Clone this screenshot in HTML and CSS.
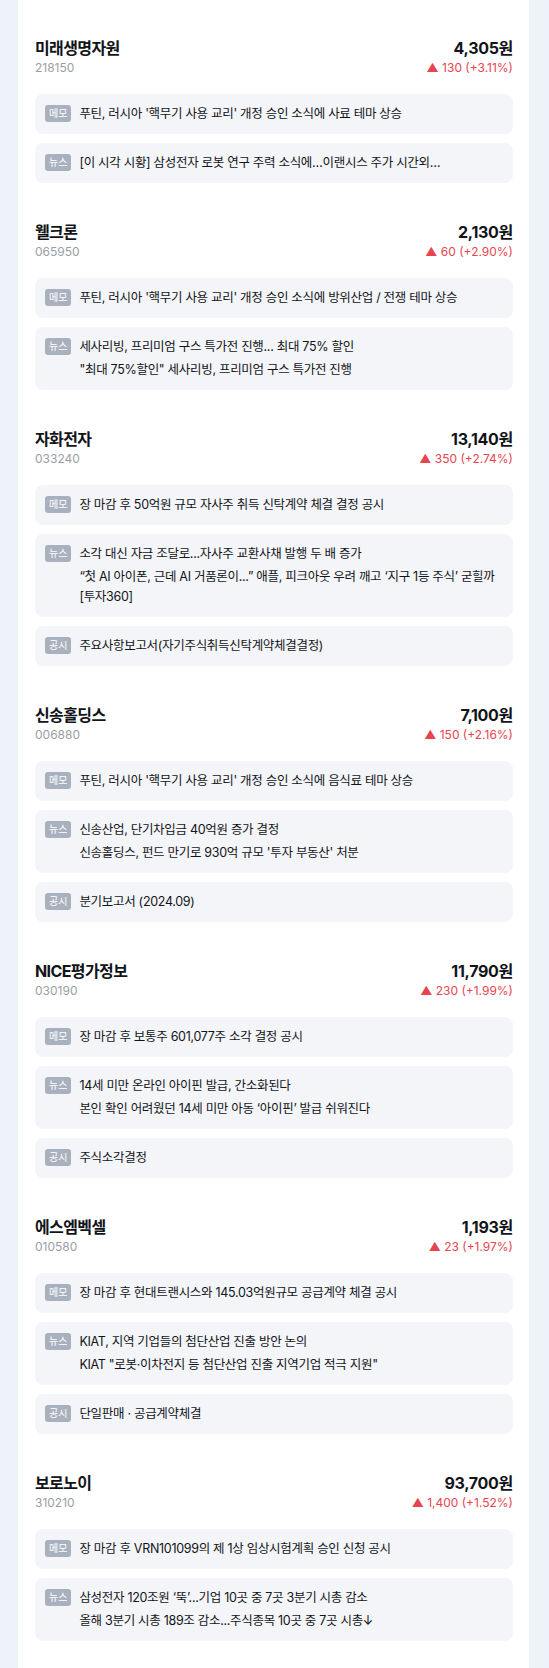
FILE: index.html
```html
<!DOCTYPE html>
<html lang="ko">
<head>
    <meta charset="UTF-8">
    <meta name="viewport" content="width=device-width, initial-scale=1.0">
    <title>오늘의 특징주</title>
    <link rel="stylesheet" href="styles.css">
</head>
<body>
    <div class="container">

        <!-- 미래생명자원 -->
        <section class="stock">
            <div class="stock-head">
                <div>
                    <div class="stock-name">미래생명자원</div>
                    <div class="stock-code">218150</div>
                </div>
                <div class="stock-price">
                    <div class="price">4,305원</div>
                    <div class="change">▲ 130 (+3.11%)</div>
                </div>
            </div>
            <div class="note">
                <span class="tag">메모</span>
                <div class="note-body">
                    <p>푸틴, 러시아 '핵무기 사용 교리' 개정 승인 소식에 사료 테마 상승</p>
                </div>
            </div>
            <div class="note">
                <span class="tag">뉴스</span>
                <div class="note-body">
                    <p>[이 시각 시황] 삼성전자 로봇 연구 주력 소식에…이랜시스 주가 시간외…</p>
                </div>
            </div>
        </section>

        <!-- 웰크론 -->
        <section class="stock">
            <div class="stock-head">
                <div>
                    <div class="stock-name">웰크론</div>
                    <div class="stock-code">065950</div>
                </div>
                <div class="stock-price">
                    <div class="price">2,130원</div>
                    <div class="change">▲ 60 (+2.90%)</div>
                </div>
            </div>
            <div class="note">
                <span class="tag">메모</span>
                <div class="note-body">
                    <p>푸틴, 러시아 '핵무기 사용 교리' 개정 승인 소식에 방위산업 / 전쟁 테마 상승</p>
                </div>
            </div>
            <div class="note">
                <span class="tag">뉴스</span>
                <div class="note-body">
                    <p>세사리빙, 프리미엄 구스 특가전 진행... 최대 75% 할인</p>
                    <p>"최대 75%할인" 세사리빙, 프리미엄 구스 특가전 진행</p>
                </div>
            </div>
        </section>

        <!-- 자화전자 -->
        <section class="stock">
            <div class="stock-head">
                <div>
                    <div class="stock-name">자화전자</div>
                    <div class="stock-code">033240</div>
                </div>
                <div class="stock-price">
                    <div class="price">13,140원</div>
                    <div class="change">▲ 350 (+2.74%)</div>
                </div>
            </div>
            <div class="note">
                <span class="tag">메모</span>
                <div class="note-body">
                    <p>장 마감 후 50억원 규모 자사주 취득 신탁계약 체결 결정 공시</p>
                </div>
            </div>
            <div class="note">
                <span class="tag">뉴스</span>
                <div class="note-body">
                    <p>소각 대신 자금 조달로...자사주 교환사채 발행 두 배 증가</p>
                    <p>“첫 AI 아이폰, 근데 AI 거품론이...” 애플, 피크아웃 우려 깨고 ‘지구 1등 주식’ 굳힐까 [투자360]</p>
                </div>
            </div>
            <div class="note">
                <span class="tag">공시</span>
                <div class="note-body">
                    <p>주요사항보고서(자기주식취득신탁계약체결결정)</p>
                </div>
            </div>
        </section>

        <!-- 신송홀딩스 -->
        <section class="stock">
            <div class="stock-head">
                <div>
                    <div class="stock-name">신송홀딩스</div>
                    <div class="stock-code">006880</div>
                </div>
                <div class="stock-price">
                    <div class="price">7,100원</div>
                    <div class="change">▲ 150 (+2.16%)</div>
                </div>
            </div>
            <div class="note">
                <span class="tag">메모</span>
                <div class="note-body">
                    <p>푸틴, 러시아 '핵무기 사용 교리' 개정 승인 소식에 음식료 테마 상승</p>
                </div>
            </div>
            <div class="note">
                <span class="tag">뉴스</span>
                <div class="note-body">
                    <p>신송산업, 단기차입금 40억원 증가 결정</p>
                    <p>신송홀딩스, 펀드 만기로 930억 규모 '투자 부동산' 처분</p>
                </div>
            </div>
            <div class="note">
                <span class="tag">공시</span>
                <div class="note-body">
                    <p>분기보고서 (2024.09)</p>
                </div>
            </div>
        </section>

        <!-- NICE평가정보 -->
        <section class="stock">
            <div class="stock-head">
                <div>
                    <div class="stock-name">NICE평가정보</div>
                    <div class="stock-code">030190</div>
                </div>
                <div class="stock-price">
                    <div class="price">11,790원</div>
                    <div class="change">▲ 230 (+1.99%)</div>
                </div>
            </div>
            <div class="note">
                <span class="tag">메모</span>
                <div class="note-body">
                    <p>장 마감 후 보통주 601,077주 소각 결정 공시</p>
                </div>
            </div>
            <div class="note">
                <span class="tag">뉴스</span>
                <div class="note-body">
                    <p>14세 미만 온라인 아이핀 발급, 간소화된다</p>
                    <p>본인 확인 어려웠던 14세 미만 아동 ‘아이핀’ 발급 쉬워진다</p>
                </div>
            </div>
            <div class="note">
                <span class="tag">공시</span>
                <div class="note-body">
                    <p>주식소각결정</p>
                </div>
            </div>
        </section>

        <!-- 에스엠벡셀 -->
        <section class="stock">
            <div class="stock-head">
                <div>
                    <div class="stock-name">에스엠벡셀</div>
                    <div class="stock-code">010580</div>
                </div>
                <div class="stock-price">
                    <div class="price">1,193원</div>
                    <div class="change">▲ 23 (+1.97%)</div>
                </div>
            </div>
            <div class="note">
                <span class="tag">메모</span>
                <div class="note-body">
                    <p>장 마감 후 현대트랜시스와 145.03억원규모 공급계약 체결 공시</p>
                </div>
            </div>
            <div class="note">
                <span class="tag">뉴스</span>
                <div class="note-body">
                    <p>KIAT, 지역 기업들의 첨단산업 진출 방안 논의</p>
                    <p>KIAT "로봇·이차전지 등 첨단산업 진출 지역기업 적극 지원"</p>
                </div>
            </div>
            <div class="note">
                <span class="tag">공시</span>
                <div class="note-body">
                    <p>단일판매 · 공급계약체결</p>
                </div>
            </div>
        </section>

        <!-- 보로노이 -->
        <section class="stock">
            <div class="stock-head">
                <div>
                    <div class="stock-name">보로노이</div>
                    <div class="stock-code">310210</div>
                </div>
                <div class="stock-price">
                    <div class="price">93,700원</div>
                    <div class="change">▲ 1,400 (+1.52%)</div>
                </div>
            </div>
            <div class="note">
                <span class="tag">메모</span>
                <div class="note-body">
                    <p>장 마감 후 VRN101099의 제 1상 임상시험계획 승인 신청 공시</p>
                </div>
            </div>
            <div class="note">
                <span class="tag">뉴스</span>
                <div class="note-body">
                    <p>삼성전자 120조원 ‘뚝’...기업 10곳 중 7곳 3분기 시총 감소</p>
                    <p>올해 3분기 시총 189조 감소...주식종목 10곳 중 7곳 시총↓</p>
                </div>
            </div>
        </section>

    </div>
</body>
</html>
```

FILE: styles.css
```css
body {
    font-family: Inter, "Noto Sans CJK KR", sans-serif;
    background-color: #eef2f9;
    color: #111418;
    margin: 0;
    padding: 0;
}

.container {
    margin: 0 20px 0 18px;
    padding: 18px 16px 30px 17px;
    background: white;
}

.stock {
    padding: 19px 0;
}

.stock-head {
    display: flex;
    justify-content: space-between;
    margin-bottom: 17px;
}

.stock-name {
    font-size: 16px;
    font-weight: bold;
    line-height: 22px;
    letter-spacing: -0.6px;
}

.stock-code {
    font-size: 12px;
    line-height: 18px;
    color: #9a9ea5;
}

.stock-price {
    text-align: right;
}

.price {
    font-size: 16px;
    font-weight: bold;
    line-height: 22px;
    letter-spacing: -0.3px;
}

.change {
    font-size: 12px;
    line-height: 18px;
    color: #e8444f;
}

.note {
    display: flex;
    align-items: flex-start;
    gap: 8px;
    background: #f4f5f8;
    border-radius: 8px;
    padding: 10px;
    margin-bottom: 9px;
}

.note:last-child {
    margin-bottom: 0;
}

.tag {
    flex-shrink: 0;
    margin-top: 1px;
    padding: 0 4px;
    height: 17px;
    line-height: 17px;
    font-size: 10px;
    color: white;
    background: #a9b1bf;
    border-radius: 3px;
}

.note-body {
    display: flex;
    flex-direction: column;
    gap: 3px;
}

.note-body p {
    margin: 0;
    font-size: 12.5px;
    line-height: 20px;
    letter-spacing: -0.3px;
}
```
